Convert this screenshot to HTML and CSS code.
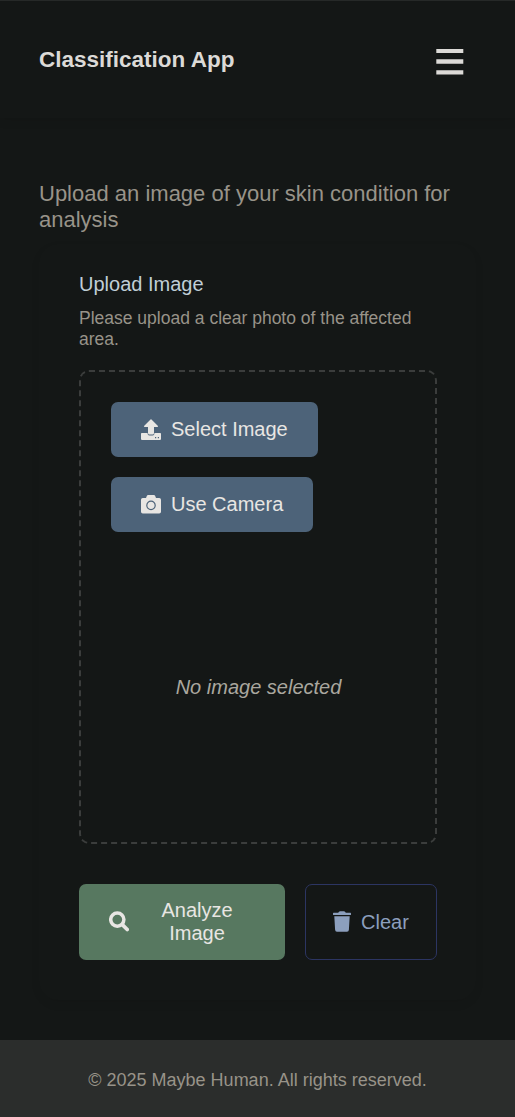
FILE: index.html
```html
<!DOCTYPE html>
<html lang="en">
<head>
<meta charset="utf-8">
<meta name="viewport" content="width=device-width, initial-scale=1">
<title>Classification App</title>
<link rel="stylesheet" href="styles.css">
</head>
<body>
<header class="header">
  <h1 class="brand">Classification App</h1>
  <button class="menu" aria-label="Menu"><svg width="28" height="28" viewBox="0 0 28 28"><path d="M0.3 1h27v4h-27zM0.3 11.3h27v4.400h-27zM0.3 22.200h27v4.400h-27z" fill="currentColor"/></svg></button>
</header>
<main class="main">
  <p class="intro">Upload an image of your skin condition for analysis</p>
  <section class="card">
    <h2 class="card-title">Upload Image</h2>
    <p class="card-text">Please upload a clear photo of the affected area.</p>
    <div class="dropzone">
      <button class="btn btn-blue"><svg class="icon" viewBox="0 0 20 21"><path d="M0 14.700q0-.8.800-.8H6.600v.5q0 2.200 3.400 2.200t3.400-2.200v-.5h5.800q.8 0 .8.800v5.400q0 .8-.8.800H.8q-.8 0-.8-.8z" fill="currentColor"/><path d="M9.500.5q.5-.4 1 0l6.500 6.500q.4.800-.6.900H13v6.200q0 1.500-1.400 1.500H8.400Q7 15.600 7 14.100V7.900H3.600q-1-.1-.6-.9z" fill="currentColor"/><path d="M14 18h1.200v1.200H14zm2.800 0H18v1.200h-1.200z" fill="#4d6379"/></svg>Select Image</button>
      <button class="btn btn-blue"><svg class="icon" viewBox="0 0 20 21"><path d="M1.800 4H5l.8-2q.4-.9 1.300-.9h5.800q.9 0 1.300.9l.8 2h3.200Q20 4 20 5.800v11.900q0 1.800-1.800 1.800H1.800Q0 19.500 0 17.700V5.800Q0 4 1.800 4z" fill="currentColor"/><circle cx="10" cy="11.400" r="4.200" fill="none" stroke="#4d6379" stroke-width="1.200"/></svg>Use Camera</button>
      <div class="preview">No image selected</div>
    </div>
    <div class="actions">
      <button class="btn btn-green"><svg class="icon" viewBox="0 0 20 21" fill="none" stroke="currentColor"><circle cx="8.300" cy="8.600" r="6.600" stroke-width="3.500"/><path d="M13.300 13.600l4.900 4.900" stroke-width="3.700" stroke-linecap="round"/></svg><span class="label">Analyze Image</span></button>
      <button class="btn btn-outline"><svg class="icon trash" viewBox="0 0 18 21" fill="currentColor"><path d="M.6 1.800h4.600L6 .8Q6.300.3 7 .3h4q.7 0 1 .5l.8 1h4.600q.6 0 .6.600v1.100q0 .6-.6.600H.6Q0 4.100 0 3.500V2.400q0-.6.600-.6zM1.300 5.300h15.400l-.8 13.500q-.1 1.900-1.900 1.900H4q-1.800 0-1.900-1.900z"/></svg>Clear</button>
    </div>
  </section>
</main>
<footer class="footer">© 2025 Maybe Human. All rights reserved.</footer>
</body>
</html>
```

FILE: styles.css
```css
* { box-sizing: border-box; }
body {
  margin: 0;
  min-height: 1117px;
  display: flex;
  flex-direction: column;
  background: #141716;
  color: #dcdad7;
  font-family: "Liberation Sans", Arial, sans-serif;
  font-size: 20px;
}
h1, h2, p { margin: 0; }
button { font: inherit; cursor: pointer; }
.header {
  height: 118px;
  padding: 0 51px 0 39px;
  border-top: 1px solid #262928;
  display: flex;
  align-items: center;
  justify-content: space-between;
  box-shadow: 0 2px 10px rgba(0, 0, 0, .1);
}
.brand { font-size: 22.5px; line-height: 28px; font-weight: 700; }
.menu {
  display: flex;
  padding: 4px 0 0;
  border: 0;
  background: none;
  color: #dcdad7;
}
.main { flex: 1; padding: 63px 39px 40px; }
.intro { font-size: 22px; line-height: 26px; color: #989389; }
.card {
  margin-top: 11px;
  padding: 28px 39px 40px 40px;
  border-radius: 20px;
  box-shadow: 0 4px 10px rgba(0, 0, 0, .07);
}
.card-title { font-size: 20px; line-height: 24px; font-weight: 400; color: #c0ced7; }
.card-text { margin-top: 12px; font-size: 17.5px; line-height: 21px; color: #989389; }
.dropzone {
  margin-top: 20px;
  height: 474px;
  padding: 30px;
  border: 2px dashed #3b3d3c;
  border-radius: 10px;
  display: flex;
  flex-direction: column;
  align-items: flex-start;
  gap: 20px;
}
.btn {
  display: flex;
  align-items: center;
  gap: 10px;
  height: 55px;
  padding: 0 30px;
  border: 0;
  border-radius: 7px;
  line-height: 23px;
  color: #e8e6e3;
}
.icon { width: 20px; height: 21px; flex: none; }
.btn-blue { background: #4d6379; }
.preview {
  flex: 1;
  align-self: stretch;
  display: flex;
  align-items: center;
  justify-content: center;
  padding: 10px 0 0 1px;
  font-style: italic;
  color: #aaa79f;
}
.actions { display: flex; gap: 20px; margin-top: 40px; }
.btn-green { flex: 1; height: 76px; background: #577860; }
.btn-green .icon, .trash { margin-bottom: 1px; }
.label { flex: 1; text-align: center; }
.btn-outline {
  width: 132px;
  height: 76px;
  padding: 0 27px;
  border: 1px solid #2c3562;
  background: none;
  color: #8c9fbd;
}
.icon.trash { width: 18px; }
.footer {
  height: 77px;
  background: #2b2d2c;
  text-align: center;
  font-size: 18px;
  line-height: 81px;
  color: #989389;
}
```
